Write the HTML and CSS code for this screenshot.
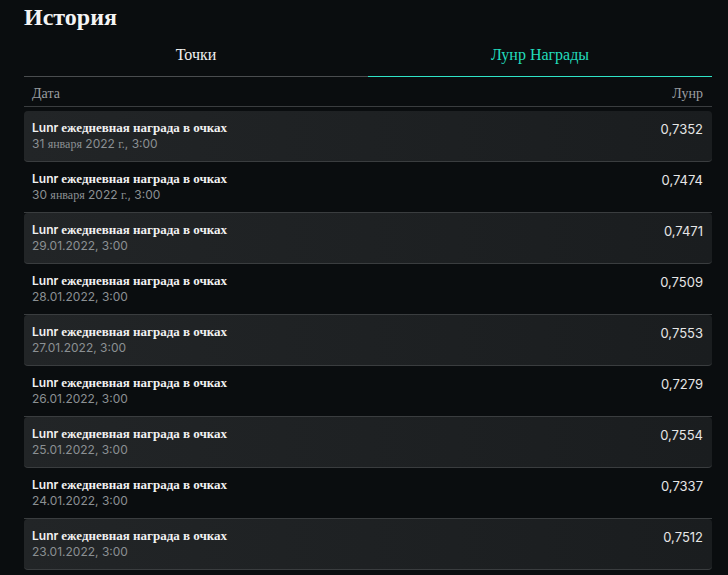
FILE: index.html
```html
<!DOCTYPE html>
<html lang="ru">
<head>
    <meta charset="UTF-8">
    <meta name="viewport" content="width=device-width, initial-scale=1.0">
    <title>История</title>
    <link rel="stylesheet" href="styles.css">
</head>
<body>
    <div class="page">
        <h1>История</h1>

        <div class="tabs">
            <div class="tab">Точки</div>
            <div class="tab active">Лунр Награды</div>
        </div>

        <div class="head-row">
            <span>Дата</span>
            <span>Лунр</span>
        </div>

        <div class="list">
            <div class="row odd">
                <div class="info">
                    <div class="name">Lunr <span class="ru">ежедневная награда в очках</span></div>
                    <div class="date">31 <span class="ru">января</span> 2022 <span class="ru">г.</span>, 3:00</div>
                </div>
                <div class="value">0,7352</div>
            </div>
            <div class="row">
                <div class="info">
                    <div class="name">Lunr <span class="ru">ежедневная награда в очках</span></div>
                    <div class="date">30 <span class="ru">января</span> 2022 <span class="ru">г.</span>, 3:00</div>
                </div>
                <div class="value">0,7474</div>
            </div>
            <div class="row odd">
                <div class="info">
                    <div class="name">Lunr <span class="ru">ежедневная награда в очках</span></div>
                    <div class="date">29.01.2022, 3:00</div>
                </div>
                <div class="value">0,7471</div>
            </div>
            <div class="row">
                <div class="info">
                    <div class="name">Lunr <span class="ru">ежедневная награда в очках</span></div>
                    <div class="date">28.01.2022, 3:00</div>
                </div>
                <div class="value">0,7509</div>
            </div>
            <div class="row odd">
                <div class="info">
                    <div class="name">Lunr <span class="ru">ежедневная награда в очках</span></div>
                    <div class="date">27.01.2022, 3:00</div>
                </div>
                <div class="value">0,7553</div>
            </div>
            <div class="row">
                <div class="info">
                    <div class="name">Lunr <span class="ru">ежедневная награда в очках</span></div>
                    <div class="date">26.01.2022, 3:00</div>
                </div>
                <div class="value">0,7279</div>
            </div>
            <div class="row odd">
                <div class="info">
                    <div class="name">Lunr <span class="ru">ежедневная награда в очках</span></div>
                    <div class="date">25.01.2022, 3:00</div>
                </div>
                <div class="value">0,7554</div>
            </div>
            <div class="row">
                <div class="info">
                    <div class="name">Lunr <span class="ru">ежедневная награда в очках</span></div>
                    <div class="date">24.01.2022, 3:00</div>
                </div>
                <div class="value">0,7337</div>
            </div>
            <div class="row odd">
                <div class="info">
                    <div class="name">Lunr <span class="ru">ежедневная награда в очках</span></div>
                    <div class="date">23.01.2022, 3:00</div>
                </div>
                <div class="value">0,7512</div>
            </div>
        </div>
    </div>
</body>
</html>
```

FILE: styles.css
```css
body {
    margin: 0;
    background: #0a0d0f;
    color: #f2f2f2;
    font-family: "Liberation Serif", serif;
}

.page {
    padding: 2px 16px 0 24px;
}

h1 {
    margin: 0;
    font-size: 24px;
    line-height: 30px;
    font-weight: bold;
    color: #f4f4f4;
}

/* Вкладки */
.tabs {
    display: flex;
    margin-top: 1px;
}

.tab {
    flex: 1;
    text-align: center;
    font-size: 16px;
    line-height: 20px;
    padding: 12px 0 11px;
    border-bottom: 1px solid #4a4d4f;
    color: #f0f0f0;
}

.tab.active {
    color: #22dcbc;
    border-bottom-color: #2fe3c6;
}

.head-row {
    display: flex;
    justify-content: space-between;
    font-size: 14px;
    line-height: 16px;
    color: #9a9ea0;
    padding: 9px 9px 4px 8px;
    border-bottom: 1px solid #3a3d3f;
    margin-bottom: 4px;
}

/* Строки */
.row {
    display: flex;
    justify-content: space-between;
    align-items: flex-start;
    box-sizing: border-box;
    height: 51px;
    padding: 9px 9px 0 8px;
    border-bottom: 1px solid #3a3d3f;
}

.row.odd {
    background: linear-gradient(90deg, #222527, #1a1d1f);
    border-radius: 4px;
}

.name, .date, .value {
    font-family: Inter, "Liberation Sans", sans-serif;
}

.name, .date {
    height: 16px;
    line-height: 16px;
    white-space: nowrap;
}

.ru {
    line-height: 1;
}

.name {
    font-size: 12px;
    font-weight: 600;
    color: #f2f2f2;
}

.name .ru {
    font-family: "Liberation Serif", serif;
    font-weight: bold;
    font-size: 13px;
}

.date {
    font-size: 12px;
    color: #8b9093;
}

.date .ru {
    font-family: "Liberation Serif", serif;
    font-size: 12px;
}

.value {
    font-size: 13px;
    line-height: 18px;
    color: #e6e6e6;
}
```
